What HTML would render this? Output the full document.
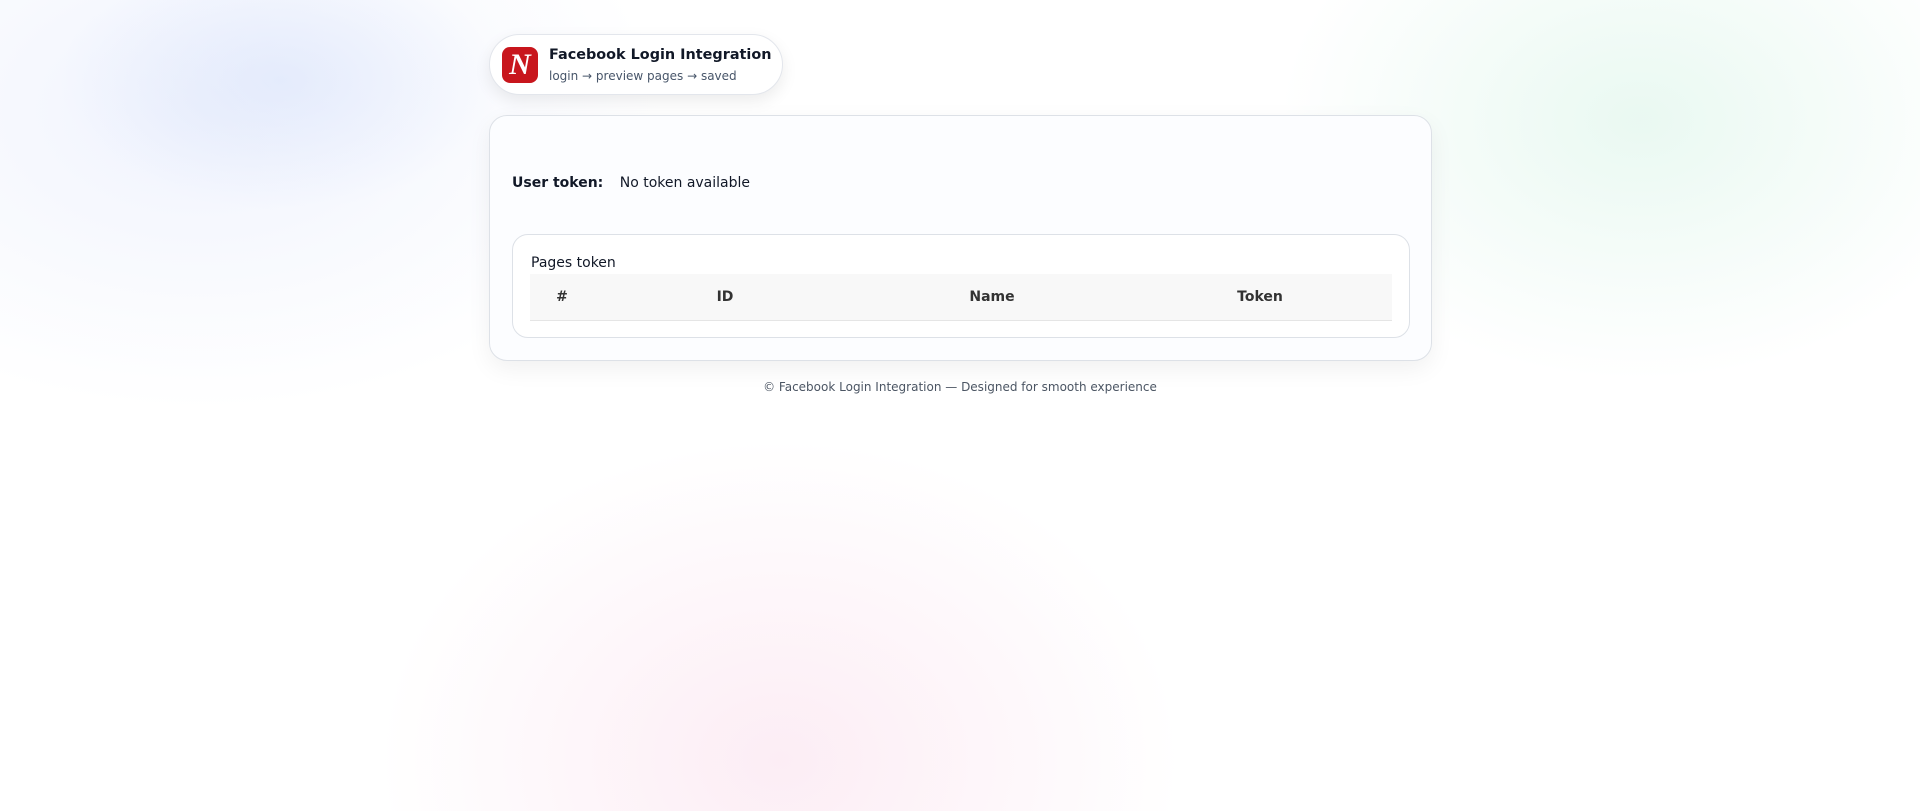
<!DOCTYPE html>
<html><head><meta charset="utf-8"><style>
*{box-sizing:border-box;margin:0;padding:0}
html,body{width:1920px;height:811px;overflow:hidden}
body{font-family:"DejaVu Sans","Liberation Sans",sans-serif;color:#111827;position:relative;
background:
radial-gradient(ellipse 220px 130px at 280px 80px,rgba(210,222,250,.45),rgba(220,230,252,0) 100%),
radial-gradient(ellipse 460px 300px at 200px 110px,rgba(228,234,252,.55),rgba(255,255,255,0) 100%),
radial-gradient(ellipse 360px 260px at 1640px 120px,rgba(212,242,228,.5),rgba(255,255,255,0) 100%),
radial-gradient(ellipse 400px 320px at 780px 760px,rgba(250,222,236,.55),rgba(255,255,255,0) 100%),
#fff}
.pill{position:absolute;left:489px;top:34px;width:294px;height:61px;border-radius:31px;background:#fff;border:1px solid #e3e6ec;box-shadow:0 6px 16px rgba(0,0,0,.08)}
.logo{position:absolute;left:12px;top:12px;width:36px;height:36px;border-radius:8px;background:#c8161d;color:#fff;font-family:"Liberation Serif",serif;font-weight:bold;font-style:italic;font-size:30px;line-height:36px;text-align:center}
.t1{position:absolute;left:59px;top:12px;font-size:14.4px;font-weight:bold;color:#111827;white-space:nowrap}
.t2{position:absolute;left:59px;top:34px;font-size:12px;color:#475569;white-space:nowrap}
.card{position:absolute;left:489px;top:115px;width:943px;height:246px;border:1px solid #dde1e7;border-radius:18px;background:rgba(252,253,255,.95);box-shadow:0 8px 24px rgba(0,0,0,.06)}
.ut{position:absolute;left:22px;top:59px;font-size:14px;white-space:nowrap}
.ut b{margin-right:12px}
.inner{position:absolute;left:22px;top:118px;width:898px;height:104px;border:1px solid #dde1e7;border-radius:16px;background:#fff}
.pt{position:absolute;left:18px;top:20px;font-size:14px}
table{position:absolute;left:17px;top:39px;width:862px;border-collapse:collapse;font-size:14px}
th{height:46px;background:#f8f8f8;border-bottom:1px solid #e5e5e5;font-weight:bold;color:#333;text-align:center}
.foot{position:absolute;left:0;width:1920px;top:380px;text-align:center;font-size:12px;color:#4b5563}
</style></head><body>
<div class="pill"><div class="logo">N</div><div class="t1">Facebook Login Integration</div><div class="t2">login → preview pages → saved</div></div>
<div class="card">
<div class="ut"><b>User token:</b> No token available</div>
<div class="inner"><div class="pt">Pages token</div>
<table><tr><th style="width:64px">#</th><th style="width:262px">ID</th><th style="width:272px">Name</th><th>Token</th></tr></table>
</div></div>
<div class="foot">© Facebook Login Integration — Designed for smooth experience</div>
</body></html>
